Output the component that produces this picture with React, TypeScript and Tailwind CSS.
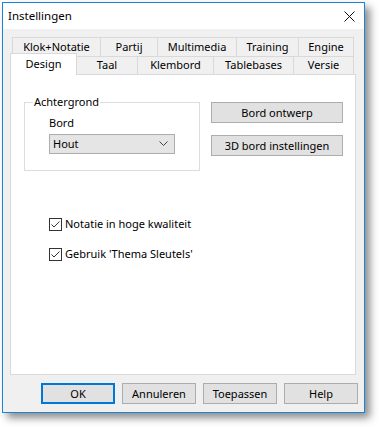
import React from 'react';

const font = { fontFamily: '"Noto Sans", "Open Sans", sans-serif' };

const row1 = [
  { label: 'Klok+Notatie', w: 'w-[89px]' },
  { label: 'Partij', w: 'w-[58px]' },
  { label: 'Multimedia', w: 'w-[80px]' },
  { label: 'Training', w: 'w-[63px]' },
  { label: 'Engine', w: 'w-[56px]' },
];

const row2 = [
  { label: 'Taal', w: 'w-[62px]' },
  { label: 'Klembord', w: 'w-[77px]' },
  { label: 'Tablebases', w: 'w-[81px]' },
  { label: 'Versie', w: 'w-[61px]' },
];

const Check = ({ label }: { label: string }) => (
  <div className="flex items-center h-[16px]">
    <span className="w-[13px] h-[13px] border border-[#333333] bg-white flex items-center justify-center">
      <svg width="11" height="11" viewBox="0 0 11 11">
        <path d="M1.5 5.5 L4 8 L9.5 2.5" fill="none" stroke="#333333" strokeWidth="1" />
      </svg>
    </span>
    <span className="ml-[3px]">{label}</span>
  </div>
);

const Btn = ({ label, primary }: { label: string; primary?: boolean }) => (
  <button
    className={`w-[74px] h-[21px] bg-[#e1e1e1] flex items-center justify-center leading-none ${
      primary ? 'border-2 border-[#0078d7]' : 'border border-[#adadad]'
    }`}
  >
    {label}
  </button>
);

export default function App() {
  return (
    <div className="w-[379px] h-[427px] bg-white text-[11px] text-black" style={font}>
      <div className="ml-[2px] mt-[2px] w-[363px] border border-[#1883d7] bg-[#f0f0f0] flex flex-col shadow-[5px_5px_8px_rgba(0,0,0,0.45)]">
        {/* title bar */}
        <div className="h-[26px] bg-white flex items-center justify-between pl-[5px] pr-[9px]">
          <span className="text-[11.5px]">Instellingen</span>
          <svg width="11" height="11" viewBox="0 0 11 11">
            <path d="M0.5 0.5 L10.5 10.5 M10.5 0.5 L0.5 10.5" stroke="#111111" strokeWidth="1" />
          </svg>
        </div>

        <div className="pt-[8px] pl-[7px]">
          {/* tabs row 1 */}
          <div className="flex ml-[2px] h-[19px]">
            {row1.map((t, i) => (
              <div
                key={t.label}
                className={`${t.w} h-[19px] border border-b-0 border-[#d9d9d9] bg-[#f0f0f0] flex items-center justify-center ${
                  i > 0 ? '-ml-px' : ''
                }`}
              >
                {t.label}
              </div>
            ))}
          </div>
          {/* tabs row 2 */}
          <div className="flex items-end h-[18px]">
            <div className="relative z-10 w-[67px] h-[22px] -mb-px bg-white border border-b-0 border-[#d9d9d9] flex items-start justify-center pt-[2px]">
              Design
            </div>
            {row2.map(t => (
              <div
                key={t.label}
                className={`${t.w} -ml-px h-[18px] border border-b-0 border-[#d9d9d9] bg-[#f0f0f0] flex items-center justify-center`}
              >
                {t.label}
              </div>
            ))}
          </div>

          {/* panel */}
          <div className="w-[346px] h-[301px] bg-white border border-[#d9d9d9] pt-[19px]">
            <div className="flex">
              <fieldset className="ml-[13px] w-[176px] border border-[#dcdcdc] pb-[16px]">
                <legend className="ml-[8px] px-[1px] leading-[16px]">Achtergrond</legend>
                <div className="pl-[24px]">
                  <div className="mt-[5px] leading-[16px]">Bord</div>
                  <div className="mt-[3px] w-[126px] h-[20px] bg-[#e5e5e5] border border-[#adadad] flex items-center justify-between pl-[3px] pr-[6px]">
                    <span>Hout</span>
                    <svg width="9" height="6" viewBox="0 0 9 6">
                      <path d="M0.5 0.5 L4.5 4.5 L8.5 0.5" fill="none" stroke="#444444" strokeWidth="1" />
                    </svg>
                  </div>
                </div>
              </fieldset>
              <div className="ml-[11px] mt-[8px] flex flex-col gap-[12px]">
                <button className="w-[132px] h-[21px] bg-[#e1e1e1] border border-[#adadad] leading-none">Bord ontwerp</button>
                <button className="w-[132px] h-[21px] bg-[#e1e1e1] border border-[#adadad] leading-none">3D bord instellingen</button>
              </div>
            </div>
            <div className="pl-[38px] mt-[45px] flex flex-col gap-[14px]">
              <Check label="Notatie in hoge kwaliteit" />
              <Check label="Gebruik 'Thema Sleutels'" />
            </div>
          </div>
        </div>

        {/* bottom buttons */}
        <div className="flex justify-end gap-[7px] pr-[6px] pt-[8px] pb-[8px]">
          <Btn label="OK" primary />
          <Btn label="Annuleren" />
          <Btn label="Toepassen" />
          <Btn label="Help" />
        </div>
      </div>
    </div>
  );
}
